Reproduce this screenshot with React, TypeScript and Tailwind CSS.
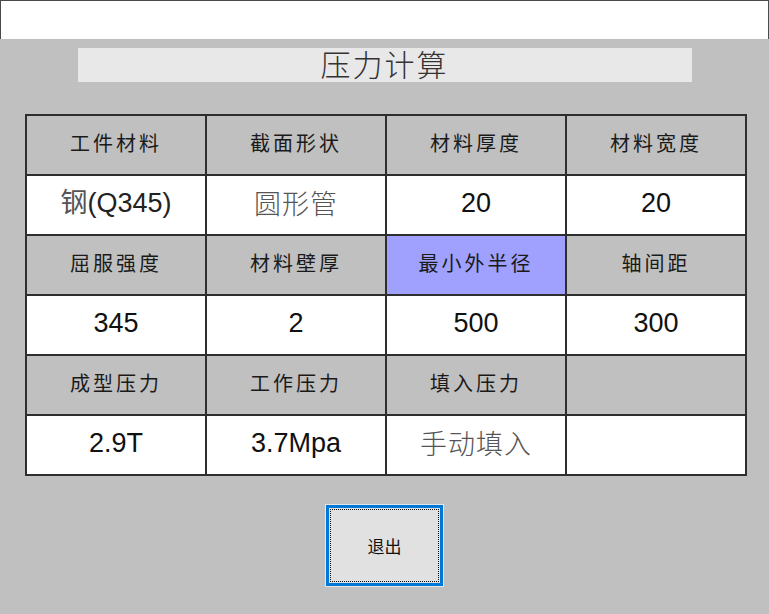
import type { ReactNode } from 'react';

type Cell = {
  text: ReactNode;
  kind: 'label' | 'value' | 'soft';
  active?: boolean;
};

const rows: Cell[][] = [
  [
    { text: '工件材料', kind: 'label' },
    { text: '截面形状', kind: 'label' },
    { text: '材料厚度', kind: 'label' },
    { text: '材料宽度', kind: 'label' },
  ],
  [
    {
      text: (
        <>
          <span className="text-[#555]">钢</span>
          <span className="text-[#222]">(Q345)</span>
        </>
      ),
      kind: 'value',
    },
    { text: '圆形管', kind: 'soft' },
    { text: '20', kind: 'value' },
    { text: '20', kind: 'value' },
  ],
  [
    { text: '屈服强度', kind: 'label' },
    { text: '材料壁厚', kind: 'label' },
    { text: '最小外半径', kind: 'label', active: true },
    { text: '轴间距', kind: 'label' },
  ],
  [
    { text: '345', kind: 'value' },
    { text: '2', kind: 'value' },
    { text: '500', kind: 'value' },
    { text: '300', kind: 'value' },
  ],
  [
    { text: '成型压力', kind: 'label' },
    { text: '工作压力', kind: 'label' },
    { text: '填入压力', kind: 'label' },
    { text: '', kind: 'label' },
  ],
  [
    { text: '2.9T', kind: 'value' },
    { text: '3.7Mpa', kind: 'value' },
    { text: '手动填入', kind: 'soft' },
    { text: '', kind: 'value' },
  ],
];

const cjk = "font-['Noto_Sans_CJK_SC',sans-serif]";
const arial = "font-['Liberation_Sans','Noto_Sans_CJK_SC',sans-serif]";

const GridCell = ({ cell }: { cell: Cell }) => {
  const base =
    'flex h-[60px] items-center justify-center border-r-2 border-b-2 border-[#2e2e2e]';
  if (cell.kind === 'label') {
    return (
      <div
        className={`${base} ${cell.active ? 'bg-[#a0a0ff]' : 'bg-[#c0c0c0]'} ${cjk} pb-[4px] text-[20px] tracking-[3px] text-[#1a1a1a]`}
      >
        {cell.text}
      </div>
    );
  }
  if (cell.kind === 'soft') {
    return (
      <div
        className={`${base} bg-white ${cjk} pb-[3px] text-[27px] font-light tracking-[1px] text-[#555]`}
      >
        {cell.text}
      </div>
    );
  }
  return (
    <div className={`${base} bg-white ${arial} pb-[3px] text-[27px] text-[#111]`}>
      {cell.text}
    </div>
  );
};

export default function App() {
  return (
    <div className="flex h-[614px] w-[769px] flex-col overflow-hidden">
      <div className="h-[39px] border-t border-r border-l border-[#4a4a4a] bg-white" />
      <div className="flex flex-1 flex-col bg-[#c0c0c0]">
        <div className="mx-auto mt-[9px] flex h-[34px] w-[614px] items-center justify-center bg-[#e8e8e8] pb-[4px]">
          <span
            className={`${cjk} text-[30px] font-light leading-none tracking-[2px] text-[#333]`}
          >
            压力计算
          </span>
        </div>

        <div className="mt-[32px] ml-[25px] grid w-[722px] grid-cols-4 border-t-2 border-l-2 border-[#2e2e2e]">
          {rows.map((row, r) =>
            row.map((cell, c) => <GridCell key={`${r}-${c}`} cell={cell} />),
          )}
        </div>

        <div className="mt-[28px] flex justify-center">
          <button
            type="button"
            className="h-[83px] w-[119px] border border-[#e6e6e6] bg-[#c0c0c0]"
          >
            <div className="flex h-full w-full border-[3px] border-[#0078d7] bg-[#e1e1e1] p-px">
              <div
                className={`flex flex-1 items-center justify-center border border-dotted border-[#111] ${cjk} text-[17px] text-[#111]`}
              >
                退出
              </div>
            </div>
          </button>
        </div>
      </div>
    </div>
  );
}
